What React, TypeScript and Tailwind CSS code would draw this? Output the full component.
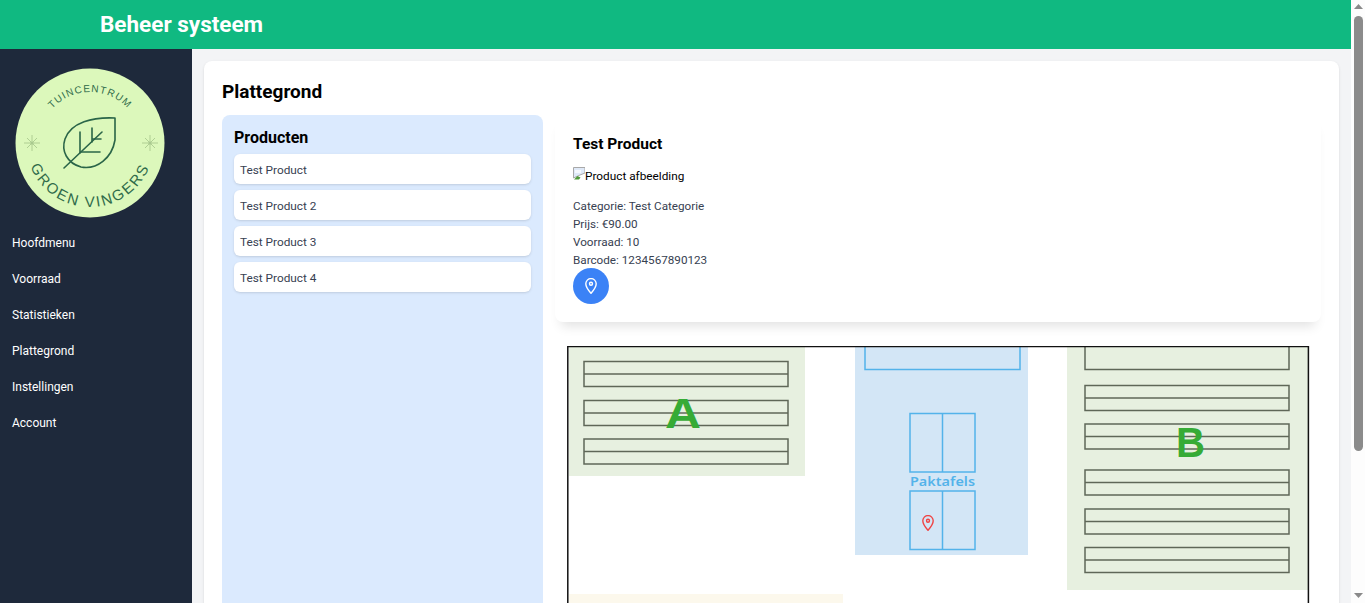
const navItems = ["Hoofdmenu", "Voorraad", "Statistieken", "Plattegrond", "Instellingen", "Account"];
const products = ["Test Product", "Test Product 2", "Test Product 3", "Test Product 4"];

function Pin({ className }: { className: string }) {
  return (
    <svg width="12" height="16" viewBox="0 0 12 16" fill="none" stroke="currentColor" strokeWidth="1.4" className={className}>
      <path d="M6 15.3C4 13 .8 9.5 .8 5.8a5.2 5.2 0 0 1 10.4 0C11.2 9.5 8 13 6 15.3Z" strokeLinejoin="round" />
      <circle cx="6" cy="5.8" r="1.5" />
    </svg>
  );
}

function Star({ x, y }: { x: number; y: number }) {
  return (
    <g transform={`translate(${x} ${y})`} stroke="#a9c98f" strokeWidth="0.9">
      <path d="M-8 0H8M0 -8V8M-5 -5L5 5M-5 5L5 -5" />
      <circle r="1.6" fill="#a9c98f" stroke="none" />
    </g>
  );
}

function Logo() {
  return (
    <svg width="150" height="150" viewBox="0 0 150 150" className="block">
      <defs>
        <path id="arc-top" d="M 24 75 A 51 51 0 0 1 126 75" />
        <path id="arc-bottom" d="M 11 75 A 64 64 0 0 0 139 75" />
      </defs>
      <circle cx="75" cy="75" r="74.5" fill="#dcf8bb" />
      <Star x={17} y={75} />
      <Star x={135} y={75} />
      <text fontFamily="'Liberation Sans', sans-serif" fontSize="10" letterSpacing="1.1" fill="#2f6b4a" textAnchor="middle">
        <textPath href="#arc-top" startOffset="50%">TUINCENTRUM</textPath>
      </text>
      <text fontFamily="'Liberation Sans', sans-serif" fontSize="15" letterSpacing="2" fill="#2f6b4a" textAnchor="middle">
        <textPath href="#arc-bottom" startOffset="50%">GROEN VINGERS</textPath>
      </text>
      <g fill="none" stroke="#2a6548" strokeWidth="1.6" strokeLinecap="round" strokeLinejoin="round">
        <path d="M100 50 C 78 49 56 54 50 71 C 46 83 52 95 66 99 C 82 102 97 90 100 72 Z" />
        <path d="M49 100 L87 64" />
        <path d="M65 64 V85 M77 60 V74 M65 84 H85 M77 71 H86" />
      </g>
    </svg>
  );
}

function BrokenImage() {
  return (
    <svg width="12" height="13" viewBox="0 0 12 13" className="mt-px shrink-0">
      <path d="M0.5 0.5H12V6L7 8L0.5 11Z" fill="#dfe9f8" stroke="#a8a8a8" />
      <path d="M1 12.5L4.5 9L7.5 10.5L6 12.5Z" fill="#4e9a3a" />
      <path d="M2 3H8V6H2Z" fill="#f5f8fd" />
    </svg>
  );
}

function Rack({ x, y, w, h, mid }: { x: number; y: number; w: number; h: number; mid: number }) {
  return (
    <g fill="none" stroke="#5f6758" strokeWidth="1.5">
      <rect x={x} y={y} width={w} height={h} />
      <path d={`M${x} ${mid}H${x + w}`} />
    </g>
  );
}

function FloorPlan() {
  return (
    <svg width="743" height="300" viewBox="567 346 743 300" className="block">
      <rect x="567" y="346" width="743" height="300" fill="#fff" />
      <rect x="569" y="346" width="236" height="130" fill="#e7f0e0" />
      <rect x="569" y="594" width="274" height="52" fill="#fcf8ec" />
      <rect x="855" y="346" width="173" height="209" fill="#d3e6f6" />
      <rect x="1067" y="346" width="241" height="244" fill="#e7f0e0" />

      <Rack x={584} y={361.5} w={204} h={25} mid={374} />
      <Rack x={584} y={400.5} w={204} h={25} mid={413} />
      <Rack x={584} y={439} w={204} h={25} mid={451.5} />

      <Rack x={1085} y={340} w={204} h={29.5} mid={340} />
      <Rack x={1085} y={385.5} w={204} h={25} mid={398} />
      <Rack x={1085} y={424} w={204} h={25} mid={436.5} />
      <Rack x={1085} y={470} w={204} h={25} mid={482.5} />
      <Rack x={1085} y={509} w={204} h={25} mid={521.5} />
      <Rack x={1085} y={547.5} w={204} h={25} mid={560} />

      <g fill="none" stroke="#53b3ea" strokeWidth="1.5">
        <rect x="865" y="340" width="155" height="29.5" />
        <rect x="910" y="413.5" width="65" height="58.5" />
        <path d="M942.5 413.5V472" />
        <rect x="910" y="491" width="65" height="58.5" />
        <path d="M942.5 491V549.5" />
      </g>

      <text x="665" y="428" fontFamily="'Liberation Sans', sans-serif" fontWeight="700" fontSize="42" fill="#36ab36" textLength="36" lengthAdjust="spacingAndGlyphs">A</text>
      <text x="1176" y="457" fontFamily="'Liberation Sans', sans-serif" fontWeight="700" fontSize="42" fill="#36ab36" textLength="29" lengthAdjust="spacingAndGlyphs">B</text>
      <text x="910" y="486" fontFamily="'Noto Sans', sans-serif" fontSize="12.5" fontWeight="600" fill="#53b3ea" textLength="65" lengthAdjust="spacingAndGlyphs">Paktafels</text>

      <path d="M567.8 646V346.6H1308.4V646" fill="none" stroke="#111" strokeWidth="1.5" />
    </svg>
  );
}

function Scrollbar() {
  return (
    <div className="flex w-[14px] shrink-0 flex-col items-center bg-[#fdfdfd]">
      <svg width="9" height="16" viewBox="0 0 9 16" className="shrink-0">
        <path d="M4.5 4L9 9H0Z" fill="#8a8a8a" />
      </svg>
      <div className="h-[435px] w-[9px] shrink-0 rounded-[5px] bg-[#8b8b8b]" />
      <div className="flex-1" />
      <svg width="9" height="16" viewBox="0 0 9 16" className="shrink-0">
        <path d="M0 6H9L4.5 11Z" fill="#8a8a8a" />
      </svg>
    </div>
  );
}

export default function App() {
  return (
    <div className="flex h-[603px] overflow-hidden font-['Roboto',sans-serif]">
      <div className="flex min-w-0 flex-1 flex-col">
        <header className="flex h-[49px] shrink-0 items-center bg-[#10b981] pl-[100px] text-[22.5px] font-bold text-white">
          Beheer systeem
        </header>
        <div className="flex min-h-0 flex-1">
          <aside className="w-[192px] shrink-0 bg-[#1e293b] pl-[12px] pt-[19px]">
            <div className="pl-[3px]">
              <Logo />
            </div>
            <nav className="mt-[7px] flex flex-col">
              {navItems.map((item) => (
                <a key={item} className="flex h-[36px] items-center text-xs text-white" href="#">
                  {item}
                </a>
              ))}
            </nav>
          </aside>
          <main className="min-w-0 flex-1 bg-[#f3f4f6] p-3">
            <div className="rounded-lg bg-white px-[18px] pb-4 pt-4 shadow-sm">
              <h1 className="pt-px text-[19px] font-bold leading-[27px] text-black">Plattegrond</h1>
              <div className="mt-[10px] flex gap-3">
                <section className="w-[321px] shrink-0 rounded-lg bg-[#dbeafe] px-3 pb-3 pt-[11px]">
                  <h2 className="text-base font-bold text-black">Producten</h2>
                  <ul className="mt-[4px] flex flex-col gap-[6px]">
                    {products.map((p) => (
                      <li key={p} className="rounded-md bg-white px-[6px] pb-[5px] pt-[7px] text-[11.8px] leading-[18px] text-[#374151] shadow">
                        {p}
                      </li>
                    ))}
                  </ul>
                </section>
                <section className="min-w-0 flex-1">
                  <div className="rounded-lg bg-white px-[18px] pb-[18px] pt-[17px] shadow-[0_10px_12px_-6px_rgba(0,0,0,0.12)]">
                    <h2 className="text-[15.5px] font-bold leading-6 text-black">Test Product</h2>
                    <div className="mt-[10px] flex items-start text-[11.8px] leading-[18px] text-black">
                      <BrokenImage />
                      <span className="mt-px">Product afbeelding</span>
                    </div>
                    <div className="mt-[12px] text-[11.7px] leading-[18px] text-[#374151]">
                      <p>Categorie: Test Categorie</p>
                      <p>Prijs: €90.00</p>
                      <p>Voorraad: 10</p>
                      <p>Barcode: 1234567890123</p>
                    </div>
                    <button type="button" className="-mt-px flex h-9 w-9 items-center justify-center rounded-full bg-[#3b82f6] text-white">
                      <Pin className="block" />
                    </button>
                  </div>
                  <div className="relative ml-3 mt-6 w-[743px]">
                    <FloorPlan />
                    <Pin className="absolute left-[355px] top-[169px] text-[#ef4444]" />
                  </div>
                </section>
              </div>
            </div>
          </main>
        </div>
      </div>
      <Scrollbar />
    </div>
  );
}
